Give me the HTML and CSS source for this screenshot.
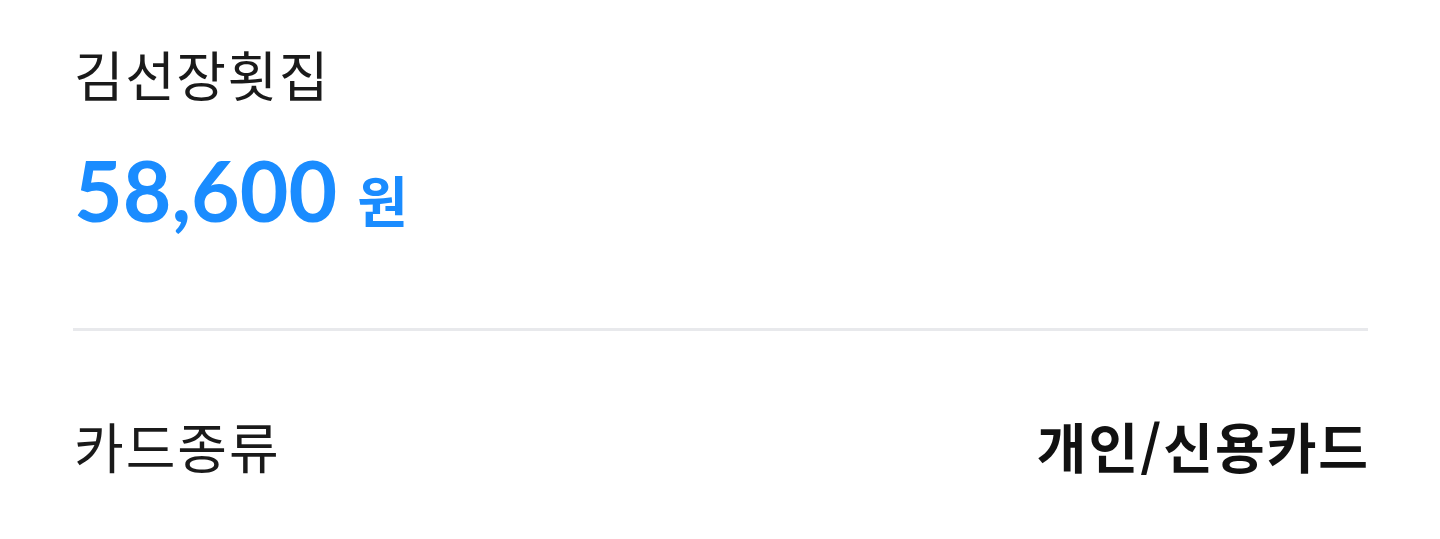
FILE: index.html
```html
<!DOCTYPE html>
<html lang="ko">
<head>
  <meta charset="UTF-8" />
  <meta name="viewport" content="width=device-width, initial-scale=1" />
  <title>결제 내역</title>
  <link rel="stylesheet" href="styles.css">
</head>
<body>

  <div class="receipt">
    <div class="store">김선장횟집</div>
    <div class="amount">
      <span class="amount-num">58,600</span>
      <span class="amount-unit">원</span>
    </div>

    <hr class="divider" />

    <div class="row">
      <span class="label">카드종류</span>
      <span class="value">개인/신용카드</span>
    </div>
  </div>

</body>
</html>
```

FILE: styles.css
```css
body {
  margin: 0;
  font-family: "Noto Sans CJK KR", "Noto Sans", sans-serif;
  color: #1a1a1a;
  background: #fff;
}
.receipt {
  padding: 44px 72px 0 74px;
}
.store {
  font-size: 54px;
  line-height: 60px;
  letter-spacing: 1.5px;
}
.amount {
  margin-top: 44px;
  display: flex;
  align-items: baseline;
  gap: 20px;
  color: #1a8cff;
}
.amount-num {
  font-family: Lato, "Noto Sans CJK KR", sans-serif;
  font-weight: bold;
  font-size: 84px;
  line-height: 84px;
}
.amount-unit {
  font-weight: bold;
  font-size: 55px;
}
.divider {
  margin: 90px 0 0 -1px;
  border: none;
  height: 3px;
  background: #e8e9ec;
}
.row {
  margin-top: 85px;
  display: flex;
  justify-content: space-between;
  font-size: 54px;
  line-height: 60px;
  letter-spacing: 2px;
}
.value {
  font-weight: bold;
  color: #111;
  margin-right: -2px;
}
```
